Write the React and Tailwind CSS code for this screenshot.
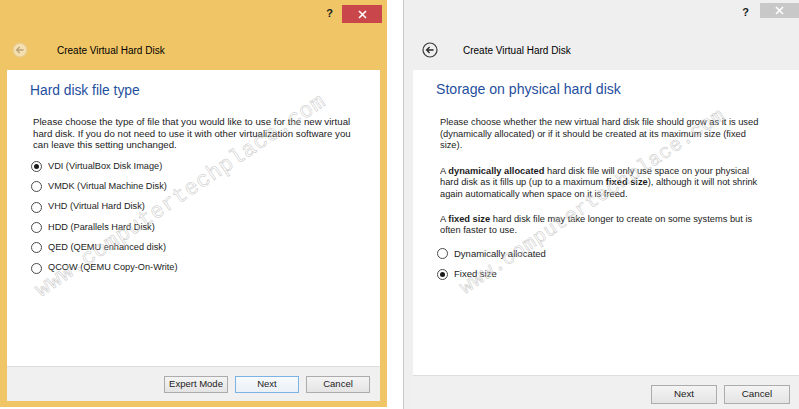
import React from "react";

const sans = "font-['Liberation_Sans',Arial,sans-serif]";

function CloseGlyph() {
  return (
    <svg width="9" height="9" viewBox="0 0 9 9">
      <path d="M1 1 L8 8 M8 1 L1 8" stroke="#ffffff" strokeWidth="1.6" />
    </svg>
  );
}

function BackButton({ faded }) {
  return (
    <svg width="16" height="16" viewBox="0 0 16 16">
      <circle
        cx="8"
        cy="8"
        r="7"
        fill={faded ? "#f6dfae" : "none"}
        stroke={faded ? "#e6c98a" : "#3a3a3a"}
        strokeWidth="1.2"
      />
      <path
        d="M11.5 8 H4.8 M7.6 5 L4.6 8 L7.6 11"
        fill="none"
        stroke={faded ? "#b9a37a" : "#2a2a2a"}
        strokeWidth="1.3"
      />
    </svg>
  );
}

function Radio({ checked, label }) {
  return (
    <div className="h-[20.3px] flex items-center">
      <span className="w-[11px] h-[11px] rounded-full border border-[#4a4a4a] bg-white flex items-center justify-center shrink-0">
        {checked && <span className="w-[5px] h-[5px] rounded-full bg-[#1a1a1a]" />}
      </span>
      <span className="ml-[6px] whitespace-nowrap">{label}</span>
    </div>
  );
}

function Btn({ children, focus, w }) {
  return (
    <div
      className={
        "flex items-center justify-center bg-gradient-to-b border " +
        (focus ? "border-[#7db2e4] from-[#f7fafd] to-[#eaf0f6] " : "border-[#acacac] from-[#f4f4f4] to-[#e4e4e4] ") +
        w
      }
    >
      {children}
    </div>
  );
}

export default function App() {
  return (
    <div className={"relative w-[799px] h-[409px] bg-white overflow-hidden flex text-[#1b1b1b] " + sans}>
      {/* left dialog */}
      <div className="w-[387px] h-[407px] bg-[#f0c566] flex flex-col pb-[6px]">
        <div className="h-[30px] flex justify-end items-start pt-[5px] pr-[5px]">
          <span className="text-[11px] font-bold mr-[9px] mt-[3px] leading-none">?</span>
          <div className="w-[40px] h-[18px] bg-[#c9474b] flex items-center justify-center">
            <CloseGlyph />
          </div>
        </div>
        <div className="h-[40px] flex items-center pl-[12px]">
          <BackButton faded />
          <span className="ml-[29px] text-[10px] text-black">Create Virtual Hard Disk</span>
        </div>
        <div className="mx-[7px] flex-1 bg-white flex flex-col">
          <div className="flex-1 pl-[23px] pt-[13px]">
            <div className="text-[13.8px] leading-[16px] text-[#1f4f9e]">Hard disk file type</div>
            <div className="mt-[17px] pl-[3px] text-[9.7px] leading-[11.5px]">
              <div className="whitespace-nowrap">Please choose the type of file that you would like to use for the new virtual</div>
              <div className="whitespace-nowrap">hard disk. If you do not need to use it with other virtualization software you</div>
              <div className="whitespace-nowrap">can leave this setting unchanged.</div>
            </div>
            <div className="mt-[6px] pl-[1px] text-[9.2px]">
              <Radio checked label="VDI (VirtualBox Disk Image)" />
              <Radio label="VMDK (Virtual Machine Disk)" />
              <Radio label="VHD (Virtual Hard Disk)" />
              <Radio label="HDD (Parallels Hard Disk)" />
              <Radio label="QED (QEMU enhanced disk)" />
              <Radio label="QCOW (QEMU Copy-On-Write)" />
            </div>
          </div>
          <div className="h-[35px] bg-[#f0f0f0] border-t border-[#dddddd] flex items-center justify-end pr-[10px] gap-[7px] text-[9.5px]">
            <Btn w="w-[64px] h-[17px]">Expert Mode</Btn>
            <Btn focus w="w-[64px] h-[17px]">Next</Btn>
            <Btn w="w-[64px] h-[17px]">Cancel</Btn>
          </div>
        </div>
      </div>

      {/* right dialog */}
      <div className="ml-auto w-[396px] h-[409px] bg-[#efefef] border-l border-[#c9c9c9] flex flex-col">
        <div className="h-[30px] flex justify-end items-start pt-[3px]">
          <span className="text-[11px] font-bold mr-[11px] mt-[4px] leading-none">?</span>
          <div className="w-[39px] h-[15px] bg-[#c8c8c8] flex items-center justify-center">
            <CloseGlyph />
          </div>
        </div>
        <div className="h-[40px] flex items-center pl-[18px]">
          <BackButton />
          <span className="ml-[25px] text-[10px] text-black">Create Virtual Hard Disk</span>
        </div>
        <div className="ml-[9px] flex-1 bg-white flex flex-col">
          <div className="flex-1 pl-[23px] pt-[11px]">
            <div className="text-[14.1px] leading-[17px] text-[#1f4f9e]">Storage on physical hard disk</div>
            <div className="mt-[19px] pl-[4px] text-[9.3px] leading-[11.6px]">
              <div className="whitespace-nowrap">Please choose whether the new virtual hard disk file should grow as it is used</div>
              <div className="whitespace-nowrap">(dynamically allocated) or if it should be created at its maximum size (fixed</div>
              <div className="whitespace-nowrap">size).</div>
              <div className="mt-[14px] whitespace-nowrap">
                A <b>dynamically allocated</b> hard disk file will only use space on your physical
              </div>
              <div className="whitespace-nowrap">
                hard disk as it fills up (up to a maximum <b>fixed size</b>), although it will not shrink
              </div>
              <div className="whitespace-nowrap">again automatically when space on it is freed.</div>
              <div className="mt-[13px] whitespace-nowrap">
                A <b>fixed size</b> hard disk file may take longer to create on some systems but is
              </div>
              <div className="whitespace-nowrap">often faster to use.</div>
            </div>
            <div className="mt-[7px] pl-[1px] text-[9.5px]">
              <Radio label="Dynamically allocated" />
              <Radio checked label="Fixed size" />
            </div>
          </div>
          <div className="h-[34px] bg-[#f0f0f0] border-t border-[#dddddd] flex items-start pt-[9px] justify-end pr-[9px] gap-[7px] text-[9.8px]">
            <Btn w="w-[66px] h-[19px]">Next</Btn>
            <Btn w="w-[66px] h-[19px]">Cancel</Btn>
          </div>
        </div>
      </div>

      {/* watermarks */}
      <span aria-hidden="true" className="absolute left-[38px] top-[282px] origin-left rotate-[-34deg] whitespace-nowrap text-[22px] leading-[22px] tracking-[0.6px] text-transparent [-webkit-text-stroke:0.5px_#c6c6c6] font-['Liberation_Mono',monospace] pointer-events-none">
        www.computertechplace.com
      </span>
      <span aria-hidden="true" className="absolute left-[462px] top-[280px] origin-left rotate-[-34deg] whitespace-nowrap text-[20px] leading-[20px] tracking-[0.6px] text-transparent [-webkit-text-stroke:0.5px_#c6c6c6] font-['Liberation_Mono',monospace] pointer-events-none">
        www.computertechplace.com
      </span>
    </div>
  );
}
